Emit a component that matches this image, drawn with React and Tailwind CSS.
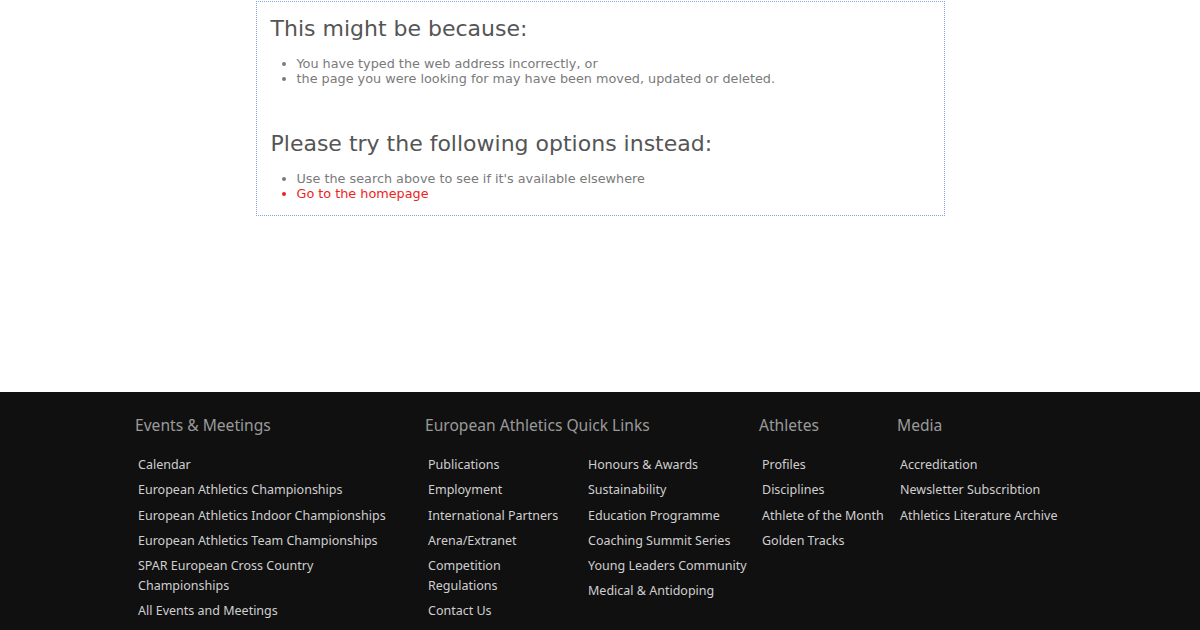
import React from "react";

const col1 = [
  "Calendar",
  "European Athletics Championships",
  "European Athletics Indoor Championships",
  "European Athletics Team Championships",
  "SPAR European Cross Country Championships",
  "All Events and Meetings",
];
const col2a = ["Publications", "Employment", "International Partners", "Arena/Extranet", "Competition Regulations", "Contact Us"];
const col2b = ["Honours & Awards", "Sustainability", "Education Programme", "Coaching Summit Series", "Young Leaders Community", "Medical & Antidoping"];
const col3 = ["Profiles", "Disciplines", "Athlete of the Month", "Golden Tracks"];
const col4 = ["Accreditation", "Newsletter Subscribtion", "Athletics Literature Archive"];

function Links({ items, w, li = "" }) {
  return (
    <ul className={`flex flex-col gap-[5.3px] pl-[3px] ${w}`}>
      {items.map((t) => (
        <li key={t} className={`text-[12.5px] leading-[20px] text-[#cfcfcf] ${li}`}>{t}</li>
      ))}
    </ul>
  );
}

function Heading({ children }) {
  return <h3 className="text-[15.6px] leading-[20px] text-[#9a9a9a] mb-[20px]">{children}</h3>;
}

export default function App() {
  return (
    <div className="w-[1200px] h-[630px] bg-white flex flex-col overflow-hidden" style={{ fontFamily: '"DejaVu Sans", sans-serif' }}>
      <div className="h-[392px] flex justify-center pt-[1px]">
        <div className="w-[689px] h-[215px] border border-dotted border-[#86a2e0] px-[14px] pt-[14px]">
          <h2 className="text-[22px] leading-[26px] text-[#555]">This might be because:</h2>
          <ul className="list-disc pl-[26px] mt-[14px] text-[12.8px] leading-[15px] text-[#7a7a7a]">
            <li>You have typed the web address incorrectly, or</li>
            <li>the page you were looking for may have been moved, updated or deleted.</li>
          </ul>
          <h2 className="text-[22px] leading-[26px] text-[#555] mt-[45px]">Please try the following options instead:</h2>
          <ul className="list-disc pl-[26px] mt-[14px] text-[12.8px] leading-[15px] text-[#7a7a7a]">
            <li>Use the search above to see if it's available elsewhere</li>
            <li className="text-[#ee2222]">Go to the homepage</li>
          </ul>
        </div>
      </div>
      <div className="flex-1 bg-[#111011]" style={{ fontFamily: '"Noto Sans", sans-serif' }}>
        <div className="w-[930px] ml-[135px] pt-[23px] flex">
          <div className="w-[290px]">
            <Heading>Events &amp; Meetings</Heading>
            <Links items={col1} w="w-[260px]" />
          </div>
          <div className="w-[334px]">
            <Heading>European Athletics Quick Links</Heading>
            <div className="flex">
              <Links items={col2a} w="w-[160px]" li="max-w-[138px]" />
              <Links items={col2b} w="w-[170px]" />
            </div>
          </div>
          <div className="w-[138px]">
            <Heading>Athletes</Heading>
            <Links items={col3} w="w-[135px]" />
          </div>
          <div className="w-[168px]">
            <Heading>Media</Heading>
            <Links items={col4} w="w-[168px]" />
          </div>
        </div>
      </div>
    </div>
  );
}
